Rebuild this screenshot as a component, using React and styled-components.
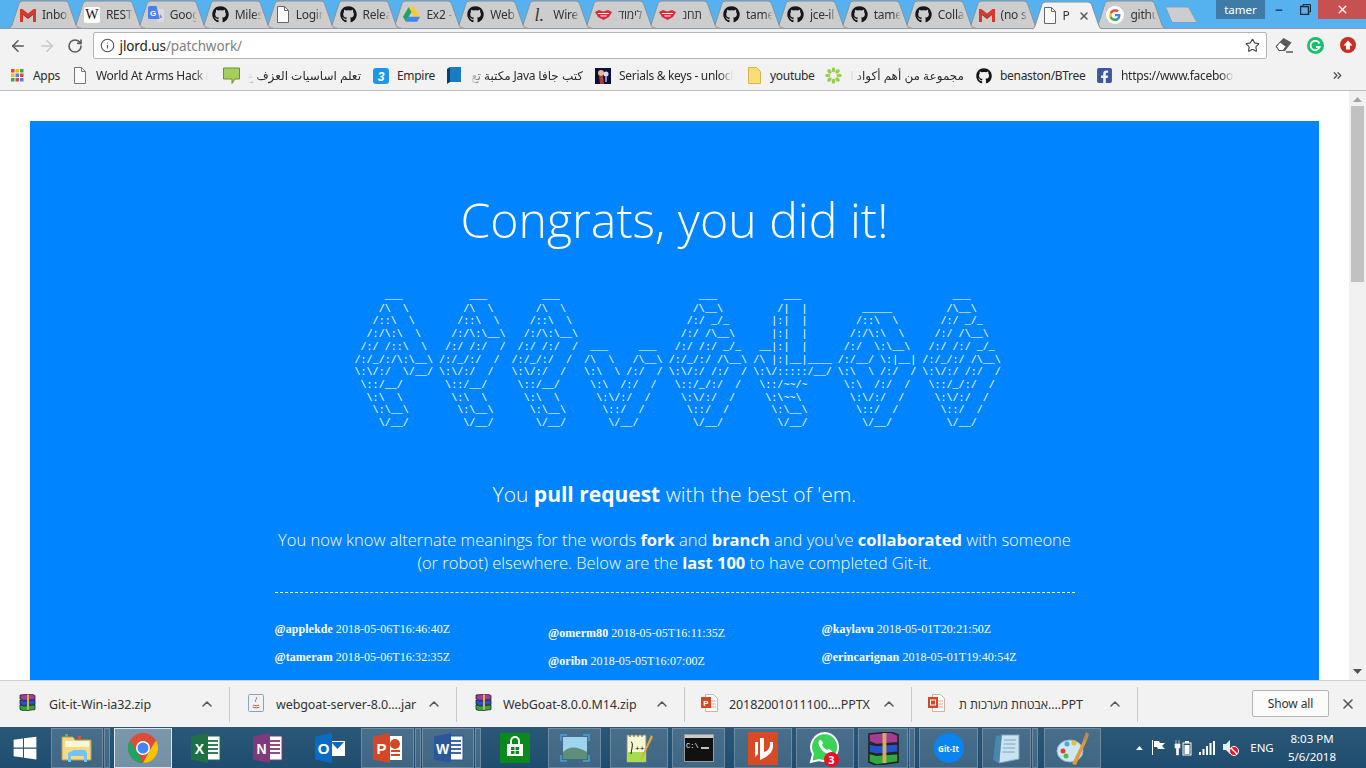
import React from "react";
import styled, { createGlobalStyle } from "styled-components";
import { FaGithub, FaFacebookSquare, FaWindows } from "react-icons/fa";
import { ArrowLeft, ArrowRight, RotateCw, Info, Star, ChevronUp, X, Minus, ChevronsRight } from "lucide-react";

const UI = `"Noto Sans", "Open Sans", "DejaVu Sans", sans-serif`;
const Global = createGlobalStyle`
  html, body { margin: 0; padding: 0; width: 1366px; height: 768px; overflow: hidden; background: #fff; }
  #root { width: 1366px; height: 768px; }
  * { box-sizing: border-box; }
`;
const Shell = styled.div`display:flex;flex-direction:column;width:1366px;height:768px;overflow:hidden;font-family:${UI};`;

/* ---------- tab strip ---------- */
const Strip = styled.div`position:relative;display:flex;align-items:flex-end;height:29px;flex:none;padding-left:7px;background:#56b2ee;border-bottom:1px solid #8f9aa3;`;
const TabBox = styled.div`
  position:relative;flex:0 0 74px;height:28px;margin-right:-10.1px;margin-bottom:${p => (p.$active ? "-1px" : "0")};
  z-index:${p => p.$z};display:flex;align-items:center;padding:1px 0 0 13px;gap:6px;
`;
const TabShape = styled.svg`position:absolute;left:0;top:0;z-index:-1;`;
const TabLabel = styled.span`
  width:${p => (p.$w || 27)}px;overflow:hidden;white-space:nowrap;font-size:12px;letter-spacing:-.25px;color:#333;
  -webkit-mask-image:linear-gradient(90deg,#000 70%,transparent);mask-image:linear-gradient(90deg,#000 70%,transparent);
`;
const TabClose = styled.span`display:flex;margin-left:1px;color:#5a5a5a;`;
const NewTab = styled.svg`flex:none;margin:0 0 3px 7px;position:relative;top:-1px;`;
const UserChip = styled.div`
  position:absolute;left:1216px;top:0;width:49px;height:19px;background:#3e7ba6;color:#fff;font-size:11.5px;
  display:flex;align-items:center;justify-content:center;
`;
const WinBtns = styled.div`position:absolute;right:0;top:0;display:flex;height:19px;`;
const WinBtn = styled.div`
  width:${p => p.$w}px;display:flex;align-items:center;justify-content:center;background:${p => p.$bg || "transparent"};color:${p => p.$c || "#1c2a33"};
`;

/* ---------- toolbar ---------- */
const Toolbar = styled.div`display:flex;align-items:center;height:33px;flex:none;background:#f2f2f2;padding:0 0 0 4px;`;
const NavBtn = styled.div`width:28.5px;display:flex;justify-content:center;color:${p => p.$c};`;
const Omni = styled.div`
  margin-left:3px;width:1174px;height:27px;background:#fff;border:1px solid #b4b4b4;border-radius:2px;display:flex;align-items:center;padding:0 6px 0 6px;
  color:#555;
`;
const Url = styled.div`margin-left:5px;flex:1;font-size:13.5px;letter-spacing:-.1px;color:#1b1b1b;`;
const UrlRest = styled.span`color:#808080;`;
const ExtRow = styled.div`display:flex;margin-left:1px;`;
const Ext = styled.div`width:32px;display:flex;justify-content:center;`;

/* ---------- bookmarks ---------- */
const Bookmarks = styled.div`display:flex;align-items:center;height:29px;flex:none;background:#f2f2f2;border-bottom:1px solid #bcbcbc;padding:0 0 1px 9px;position:relative;`;
const Mark = styled.div`flex:0 0 ${p => p.$w}px;display:flex;align-items:center;gap:8px;`;
const MarkIcon = styled.span`flex:0 0 16px;display:flex;justify-content:center;`;
const MarkLabel = styled.span`
  width:${p => p.$w}px;overflow:hidden;white-space:nowrap;font-size:12px;letter-spacing:-.3px;color:#2b2b2b;
  direction:${p => (p.$rtl ? "rtl" : "ltr")};
  ${p => (p.$fade ? `-webkit-mask-image:linear-gradient(${p.$rtl ? "270deg" : "90deg"},#000 88%,transparent);mask-image:linear-gradient(${p.$rtl ? "270deg" : "90deg"},#000 88%,transparent);` : "")}
`;
const More = styled.span`position:absolute;left:1331px;top:7px;color:#555;display:flex;`;

/* ---------- page ---------- */
const Viewport = styled.div`flex:1;min-height:0;display:flex;background:#fff;`;
const Page = styled.main`flex:1;min-width:0;height:100%;overflow:hidden;padding:30px 30px 0;`;
const Card = styled.section`
  background:#0084ff;color:#fff;height:700px;padding-top:62px;display:flex;flex-direction:column;align-items:center;
  font-family:"Open Sans",sans-serif;font-weight:300;
`;
const Title = styled.h1`margin:0;font-size:48.2px;line-height:72px;font-weight:300;`;
const Art = styled.pre`
  margin:36px 0 0 0;font-family:"Liberation Mono",monospace;font-size:10px;letter-spacing:.04px;line-height:12.7px;font-weight:400;width:642px;
  position:relative;left:1px;
`;
const Lead = styled.p`margin:47.5px 0 0;font-size:21px;line-height:32px;text-align:center;b{font-weight:700;}`;
const Body = styled.p`margin:19px 0 0;width:800px;font-size:16.5px;line-height:22.5px;text-align:center;b{font-weight:700;}`;
const Rule = styled.hr`width:800px;margin:18px 0 0;border:0;border-top:1px dashed #fff;`;
const Names = styled.div`width:800px;display:flex;margin-top:12px;font-family:"Liberation Serif",serif;font-size:12px;letter-spacing:.05px;font-weight:400;`;
const NameCol = styled.div`flex:0 0 273.5px;padding-top:${p => p.$top}px;display:flex;flex-direction:column;gap:13px;`;
const Name = styled.div`line-height:15px;white-space:nowrap;b{font-weight:700;}`;

const Scroll = styled.aside`flex:0 0 17px;background:#f1f1f1;display:flex;flex-direction:column;align-items:center;height:100%;`;
const Arrow = styled.svg`flex:none;margin:${p => p.$m};`;
const Thumb = styled.div`width:13px;height:176px;background:#c1c1c1;margin-top:4px;`;

/* ---------- downloads ---------- */
const Downloads = styled.div`display:flex;align-items:center;height:47px;flex:none;background:#f2f2f2;border-top:1px solid #cfcfcf;position:relative;`;
const Dl = styled.div`
  flex:0 0 ${p => p.$w}px;height:35px;display:flex;align-items:center;padding-left:${p => p.$pl || 17}px;border-right:1px solid #c9c9c9;
`;
const DlIcon = styled.span`flex:0 0 20px;display:flex;justify-content:center;margin-right:${p => p.$gap ?? 12}px;margin-top:-3px;`;
const DlName = styled.span`flex:1;font-size:12.5px;letter-spacing:-.1px;color:#333;white-space:nowrap;overflow:hidden;padding-top:1px;`;
const DlCaret = styled.span`flex:0 0 16px;display:flex;margin-right:14px;color:#555;`;
const ShowAll = styled.button`
  position:absolute;left:1252px;top:9px;width:77px;height:27px;background:#fbfbfb;border:1px solid #b5b5b5;border-radius:2px;font:12px ${UI};color:#333;padding:0;letter-spacing:-.1px;
`;
const DlClose = styled.span`position:absolute;left:1340px;top:15px;color:#555;display:flex;`;

/* ---------- taskbar ---------- */
const Taskbar = styled.div`position:relative;display:flex;align-items:stretch;height:41px;flex:none;background:linear-gradient(#2b5878,#1f4d6f);padding-top:1px;`;
const TaskBtn = styled.div`
  flex:0 0 ${p => p.$w}px;margin-left:${p => p.$ml || 0}px;display:flex;align-items:center;justify-content:center;position:relative;
  ${p => p.$open ? `background:rgba(255,255,255,.14);box-shadow:inset 0 0 0 1px rgba(255,255,255,.22);` : ""}
  ${p => p.$active ? `background:rgba(255,255,255,.38);box-shadow:inset 0 0 0 1px rgba(255,255,255,.75);` : ""}
`;
const Sliver = styled.div`flex:0 0 6px;margin-left:1px;background:rgba(255,255,255,.14);box-shadow:inset 0 0 0 1px rgba(255,255,255,.22);`;
const Tray = styled.div`position:absolute;left:1132px;top:0;bottom:0;display:flex;align-items:center;color:#fff;`;
const TrayIcon = styled.span`flex:0 0 ${p => p.$w}px;display:flex;justify-content:center;`;
const Lang = styled.span`flex:0 0 38px;text-align:center;font-size:11.5px;`;
const Clock = styled.div`flex:0 0 62px;text-align:center;font-size:11.5px;line-height:18px;`;
const GitIt = styled.div`
  width:30px;height:30px;border-radius:50%;background:#0a84f0;color:#fff;font-size:8px;font-weight:700;display:flex;align-items:center;justify-content:center;
`;
const Badge = styled.span`
  position:absolute;right:15px;bottom:1px;width:15px;height:15px;border-radius:50%;background:#e81123;color:#fff;font-size:11px;font-weight:700;display:flex;align-items:center;justify-content:center;
`;

/* ---------- icons ---------- */
const Gmail = () => (
  <svg width="16" height="14" viewBox="0 0 16 14"><path d="M0 1h2.400L8 5.600 13.600 1H16v13h-3V5.200L8 9.200 3 5.200V14H0z" fill="#d4392b"/><path d="M3 5.200 8 9.200l5-4V7L8 11 3 7z" fill="#a9281d"/></svg>
);
const Wiki = () => <WikiBox>W</WikiBox>;
const WikiBox = styled.span`width:16px;height:16px;background:#fff;border-radius:2px;color:#111;font:400 14px "Liberation Serif",serif;display:flex;align-items:center;justify-content:center;`;
const Translate = () => (
  <svg width="16" height="17" viewBox="0 0 16 17"><path d="M7 3h7.500A1.500 1.500 0 0 1 16 4.500v10A1.500 1.500 0 0 1 14.500 16H8.500l1.500-3z" fill="#d8dbe0"/><path d="M0 1.500A1.500 1.500 0 0 1 1.500 0h7l3 13H1.500A1.500 1.500 0 0 1 0 11.500z" fill="#4a80ee"/><text x="2" y="9.500" fontSize="8" fontWeight="700" fill="#fff" fontFamily="Liberation Sans">G</text><path d="M12 8l2.500 4-3-.5z" fill="#7b8aa3"/></svg>
);
const Doc = ({ c = "#666" }) => (
  <svg width="14" height="17" viewBox="0 0 14 17" fill="#fbfbfb" stroke={c} strokeWidth="1"><path d="M1.500.5h7l4 4v12h-11z"/><path d="M8.500.5v4h4" fill="none"/></svg>
);
const Drive = () => (
  <svg width="17" height="15" viewBox="0 0 17 15"><path d="M5.700 0h5.600l5.700 9.800h-5.600z" fill="#fcc934"/><path d="M5.700 0 0 9.800 2.800 14.700 8.500 4.900z" fill="#1fa463"/><path d="M2.800 14.700h11.400L17 9.800H5.600z" fill="#4285f4"/></svg>
);
const WireL = () => <WireBox>l.</WireBox>;
const WireBox = styled.span`width:16px;text-align:center;font:italic 400 18px "Liberation Serif",serif;color:#333;line-height:16px;`;
const Lips = () => (
  <svg width="17" height="10" viewBox="0 0 17 10"><path d="M0 2 4 0l4.500 1.500L13 0l4 2-3 5-5.500 3L3 7z" fill="#dc2a3a"/><path d="M2.500 3h12l-1 1H3.500zM5 5.500h7l-1 1H6z" fill="#fff"/></svg>
);
const GLogo = () => (
  <svg width="18" height="18" viewBox="0 0 18 18"><circle cx="9" cy="9" r="9" fill="#fff"/><path d="M14.500 9.200c0-.4 0-.8-.1-1.200H9v2.300h3.100a2.700 2.700 0 0 1-1.200 1.700v1.500h1.900c1.100-1 1.700-2.500 1.700-4.300z" fill="#4285f4"/><path d="M9 15c1.600 0 2.900-.5 3.800-1.500L10.900 12c-.5.400-1.200.6-1.900.6-1.500 0-2.800-1-3.200-2.400h-2v1.500C4.700 13.700 6.700 15 9 15z" fill="#34a853"/><path d="M5.800 10.200a3.600 3.600 0 0 1 0-2.400V6.300h-2a6 6 0 0 0 0 5.400z" fill="#fbbc05"/><path d="M9 5.400c.8 0 1.600.3 2.200.9l1.700-1.700A6 6 0 0 0 3.800 6.300l2 1.500C6.200 6.400 7.500 5.400 9 5.400z" fill="#ea4335"/></svg>
);
const Apps = () => (
  <svg width="13" height="13" viewBox="0 0 13 13">
    {["#ea4335", "#fbbc05", "#34a853", "#fbbc05", "#4285f4", "#ea4335", "#34a853", "#ea4335", "#4285f4"].map((c, i) => (
      <rect key={i} x={(i % 3) * 4.500} y={Math.floor(i / 3) * 4.500} width="3.500" height="3.500" fill={c} />
    ))}
  </svg>
);
const Chat = () => (
  <svg width="17" height="17" viewBox="0 0 17 17"><path d="M.5 1h16v11H12l-3 4.500V12H.5z" fill="#a4cf5e" stroke="#6c8f35"/></svg>
);
const Three = () => (
  <svg width="16" height="16" viewBox="0 0 16 16"><rect width="16" height="16" rx="3" fill="#1e96e6"/><text x="8" y="12.500" textAnchor="middle" fontSize="12" fontWeight="700" fontStyle="italic" fill="#fff" fontFamily="Liberation Sans">3</text></svg>
);
const Book = () => (
  <svg width="14" height="17" viewBox="0 0 14 17"><rect x="3" width="11" height="15" fill="#1b7cc4"/><path d="M0 2 3 0v15l-3 2z" fill="#0e3f66"/></svg>
);
const Serials = () => (
  <svg width="16" height="16" viewBox="0 0 16 16"><rect width="16" height="16" fill="#0c0e3c"/><circle cx="6" cy="5" r="3" fill="#e5b98b"/><path d="M4 8h4l1 8H5z" fill="#b23a3a"/><circle cx="11" cy="6" r="2.500" fill="#d9d9e8"/><path d="M10 8h2v6h-2z" fill="#8893c7"/></svg>
);
const Folder = () => (
  <svg width="13" height="17" viewBox="0 0 13 17"><path d="M.5.5h8l4 4v12H.5z" fill="#fbdc78" stroke="#d8b44f"/></svg>
);
const Flower = () => (
  <svg width="17" height="17" viewBox="0 0 17 17" fill="#9ccc4a">
    {[0, 45, 90, 135, 180, 225, 270, 315].map(a => <ellipse key={a} cx="8.500" cy="2.800" rx="1.800" ry="2.600" transform={`rotate(${a} 8.500 8.500)`} />)}
  </svg>
);
const Eraser = () => (
  <svg width="20" height="16" viewBox="0 0 20 16"><path d="M9.500 1 17.500 5.500 11 14H5L1.500 9.500z" fill="#5a5a5a"/><path d="M2.500 9.500 6 5 12 9.500 9 13.500H5z" fill="#fff" stroke="#5a5a5a"/><path d="M12 15h7" stroke="#5a5a5a" strokeWidth="1.500"/></svg>
);
const Grammarly = () => (
  <svg width="17" height="17" viewBox="0 0 17 17"><circle cx="8.500" cy="8.500" r="8.500" fill="#15c26b"/><path d="M12.500 6.500a4.700 4.700 0 1 0 .2 3.500H9" fill="none" stroke="#fff" strokeWidth="1.800"/></svg>
);
const Upload = () => (
  <svg width="16" height="16" viewBox="0 0 16 16"><circle cx="8" cy="8" r="8" fill="#c62f22"/><path d="M8 3.500 12.500 8.500H10V12.500H6V8.500H3.500z" fill="#fff"/></svg>
);
const Rar = ({ s = 17 }) => (
  <svg width={s} height={s} viewBox="0 0 17 17">
    <path d="M1 1 12 0l4 1.500v4L5 6.500 1 5z" fill="#a43c96" stroke="#222" strokeWidth=".8"/>
    <path d="M1 6l4 1 11-1v4.500L5 11.500 1 10.500z" fill="#2453c9" stroke="#222" strokeWidth=".8"/>
    <path d="M1 11l4 1 11-1v4.500L5 17l-4-1.500z" fill="#2ea83f" stroke="#222" strokeWidth=".8"/>
    <path d="M8 .5h2v15.500H8z" fill="#d2ac62"/>
  </svg>
);
const JavaFile = () => (
  <svg width="16" height="18" viewBox="0 0 16 18"><rect x=".5" y=".5" width="15" height="17" rx="1" fill="#eef2f6" stroke="#8ea1b6"/><path d="M8 3c2 2-2 3 0 5M5 11c2 1 5 1 6 0M4.500 13c2 1 6 1 7 0" fill="none" stroke="#c7592c" strokeWidth="1"/></svg>
);
const PptFile = ({ box }) => (
  <svg width="18" height="18" viewBox="0 0 18 18"><path d="M4.500.5h8l4 4v13h-12z" fill="#fff" stroke="#c9b3a8"/><path d="M10 7h5M10 10h5M10 13h5" stroke="#e6a58c"/><rect y="3" width="10" height="11" fill="#d24726"/>{box ? <rect x="2.500" y="6" width="5" height="5" fill="none" stroke="#fff"/> : <text x="5" y="12" textAnchor="middle" fontSize="8" fontWeight="700" fill="#fff" fontFamily="Liberation Sans">P</text>}</svg>
);
const OfficeIcon = ({ bg, letter, sheet }) => (
  <svg width="31" height="30" viewBox="0 0 31 30">
    <path d="M13 3h17v24H13z" fill="#fff" stroke={bg}/>
    {[8, 12, 16, 20].map(y => <path key={y} d={`M15 ${y}h13`} stroke={sheet || bg} strokeWidth="1.800"/>)}
    <path d="M1 3.500 18 0v30L1 26.500z" fill={bg}/>
    <text x="9.500" y="20.500" textAnchor="middle" fontSize="14" fontWeight="700" fill="#fff" fontFamily="Liberation Sans">{letter}</text>
  </svg>
);
const Explorer = () => (
  <svg width="32" height="30" viewBox="0 0 32 30"><path d="M1 4h11l2 3h16v20H1z" fill="#f4d98a" stroke="#b99b4d"/><path d="M4 8h24v6H4z" fill="#fff6d8"/><rect x="4" y="1" width="3" height="3" fill="#58b947"/><rect x="17" y="3" width="3" height="3" fill="#d9503f"/><path d="M7 29V20l6-3h11l2 3v9h-3v-6H10v6z" fill="#74c3ee"/></svg>
);
const Chrome = () => (
  <svg width="30" height="30" viewBox="0 0 30 30"><circle cx="15" cy="15" r="15" fill="#dd4b39"/><path d="M15 30 22 17 28 7.500A15 15 0 0 1 15 30z" fill="#f6c500"/><path d="M15 30A15 15 0 0 1 2 7.500L9 18.500z" fill="#1ea362"/><circle cx="15" cy="15" r="7" fill="#fff"/><circle cx="15" cy="15" r="5.500" fill="#4285f4"/></svg>
);
const Outlook = () => (
  <svg width="31" height="30" viewBox="0 0 31 30"><path d="M16 8h15v15H16z" fill="#fff"/><path d="M17 9l6.500 7L30 9z" fill="#0a6bc4"/><path d="M1 3.500 18 0v30L1 26.500z" fill="#0a6bc4"/><text x="9.500" y="20.500" textAnchor="middle" fontSize="15" fontWeight="700" fill="#fff" fontFamily="Liberation Sans">O</text></svg>
);
const Ppt = () => (
  <svg width="31" height="30" viewBox="0 0 31 30"><path d="M13 3h17v24H13z" fill="#fff"/><circle cx="23" cy="11" r="5" fill="#d24726"/><path d="M19 18h9M19 22h9" stroke="#d24726" strokeWidth="1.800"/><path d="M1 3.500 18 0v30L1 26.500z" fill="#d24726"/><text x="9.500" y="20.500" textAnchor="middle" fontSize="15" fontWeight="700" fill="#fff" fontFamily="Liberation Sans">P</text></svg>
);
const Store = () => (
  <svg width="30" height="30" viewBox="0 0 30 30"><rect width="30" height="30" fill="#0b8a1c"/><path d="M7 11h16v12H7z" fill="#fff"/><path d="M11 11V8a4 4 0 0 1 8 0v3" fill="none" stroke="#fff" strokeWidth="2"/><path d="M11 14h3.500v3H11zM15.500 14H19v3h-3.500zM11 18h3.500v3H11zM15.500 18H19v3h-3.500z" fill="#0b8a1c"/></svg>
);
const Photos = () => (
  <svg width="30" height="28" viewBox="0 0 30 28"><rect x="3" y="3" width="24" height="22" fill="#9fd4ee"/><path d="M3 18c6-6 14-6 24 0v7H3z" fill="#5d8f7a"/><path d="M1 7V1h6M23 1h6v6M1 21v6h6M29 21v6h-6" fill="none" stroke="#4aa4dc" strokeWidth="1.500"/></svg>
);
const Npp = () => (
  <svg width="30" height="32" viewBox="0 0 30 32"><path d="M3 3h19v27H3z" fill="#f6f8d2" stroke="#888"/><path d="M3 20h19v10H3z" fill="#a6dd4c"/><path d="M6 1v4M10 1v4M14 1v4M18 1v4" stroke="#555"/><text x="11" y="19" fontSize="8" fill="#111" fontFamily="Liberation Mono">++</text><path d="M7 10c3 0 0 10 0 12" stroke="#111" fill="none"/><path d="M27 3 18 24l-2 4 3-3L29 5z" fill="#e7a53a"/></svg>
);
const Cmd = () => (
  <svg width="30" height="28" viewBox="0 0 30 28"><rect x=".5" y=".5" width="29" height="27" fill="#111" stroke="#9a9a9a"/><rect x="1" y="1" width="28" height="3" fill="#c9c9c9"/><text x="2" y="14" fontSize="7" fill="#fff" fontFamily="Liberation Mono">C:\</text><path d="M17 14h8" stroke="#fff" strokeWidth="1.500"/></svg>
);
const Foxit = () => (
  <svg width="30" height="33" viewBox="0 0 30 33"><rect width="30" height="33" fill="#d84a24"/><path d="M12 6h4v14c3-1 5-2 6-7v-3h3v4c0 7-6 11-13 14z" fill="#fff"/><path d="M7 10h3v12l-3 3z" fill="#fff"/></svg>
);
const Whats = () => (
  <svg width="32" height="32" viewBox="0 0 32 32"><path d="M16 1a14 14 0 0 0-12 21L2 30l8-2A14 14 0 1 0 16 1z" fill="#3ed15a" stroke="#fff" strokeWidth="2"/><path d="M11 8c-2 1-2 4 0 7 2 4 6 7 9 7 2 0 3-1 3-3l-3-2-2 1c-2-1-4-3-5-5l1-2-2-3z" fill="#fff"/></svg>
);
const Notepad = () => (
  <svg width="30" height="32" viewBox="0 0 30 32"><path d="M9 3h18v24l-20 4z" fill="#c9e4f0" stroke="#7fa7b8"/><path d="M10 3l-3 28-6-3 3-24z" fill="#4b87ad"/><path d="M12 8h12M11.500 12h12M11 16h12M10.500 20h12" stroke="#7aa5bb"/></svg>
);
const Paint = () => (
  <svg width="34" height="34" viewBox="0 0 34 34"><ellipse cx="14" cy="20" rx="13" ry="11" fill="#cfe6f3" stroke="#8eb4c8"/><circle cx="7" cy="20" r="2.500" fill="#e03c3c"/><circle cx="11" cy="13" r="2.500" fill="#46a8e0"/><circle cx="18" cy="12" r="2.500" fill="#e8c02f"/><circle cx="10" cy="25" r="2.500" fill="#54b948"/><path d="M16 33 28 8l3 1-11 25z" fill="#e19a3c"/><path d="M27 9l3-8 3 2-2 7z" fill="#b98a52"/></svg>
);
const NotifFlag = () => (
  <svg width="14" height="15" viewBox="0 0 14 15" fill="#fff"><path d="M1 0h1v15H1zM3 1h5l1 2h5L11 6l3 3H7L6 7H3z"/></svg>
);
const Battery = () => (
  <svg width="18" height="16" viewBox="0 0 18 16"><rect x="9" y="3" width="8" height="12" fill="none" stroke="#fff"/><rect x="11" y="1" width="4" height="2" fill="#fff"/><rect x="10.500" y="5" width="5" height="9" fill="#fff"/><path d="M2 0v4M5 0v4M1 4h5v4H4.500v7h-2V8H1z" fill="#fff" stroke="#fff" strokeWidth=".6"/></svg>
);
const Signal = () => (
  <svg width="16" height="14" viewBox="0 0 16 14" fill="#fff"><rect x="0" y="11" width="2" height="3"/><rect x="3.500" y="8" width="2" height="6"/><rect x="7" y="5" width="2" height="9"/><rect x="10.500" y="2" width="2" height="12"/><rect x="14" y="0" width="2" height="14"/></svg>
);
const Volume = () => (
  <svg width="16" height="17" viewBox="0 0 16 17"><path d="M0 5h3l4-4v14l-4-4H0z" fill="#e8eef2"/><circle cx="11" cy="12" r="4.500" fill="#e81123" stroke="#fff"/><path d="M8 9l6 6" stroke="#fff" strokeWidth="1.500"/></svg>
);

/* ---------- data ---------- */
const Gh = () => <FaGithub size={17} color="#161616" />;
const tabs = [
  [<Gmail />, "Inbox"], [<Wiki />, "REST"], [<Translate />, "Google"], [<Gh />, "Milestone"],
  [<Doc />, "Login"], [<Gh />, "Releases"], [<Drive />, "Ex2 - "], [<Gh />, "Web"],
  [<WireL />, "Wire"], [<Lips />, "לימוד"], [<Lips />, "תחנ"], [<Gh />, "tamer"],
  [<Gh />, "jce-il"], [<Gh />, "tamer"], [<Gh />, "Collab"],
  [<Gmail />, "(no s"], [<Doc />, "P", true], [<GLogo />, "github"],
];
const art = [
  [[5, "___"], [19, "___"], [31, "___"], [57, "___"], [71, "___"], [99, "___"]],
  [[4, "/\\  \\"], [18, "/\\  \\"], [30, "/\\  \\"], [56, "/\\__\\"], [70, "/|  |"], [84, "_____"], [98, "/\\__\\"]],
  [[3, "/::\\  \\"], [17, "/::\\  \\"], [29, "/::\\  \\"], [55, "/:/ _/_"], [69, "|:|  |"], [83, "/::\\  \\"], [97, "/:/ _/_"]],
  [[2, "/:/\\:\\  \\"], [16, "/:/\\:\\__\\"], [28, "/:/\\:\\__\\"], [54, "/:/ /\\__\\"], [69, "|:|  |"], [82, "/:/\\:\\  \\"], [96, "/:/ /\\__\\"]],
  [[1, "/:/ /::\\  \\"], [15, "/:/ /:/  /"], [27, "/:/ /:/  /"], [39, "___"], [47, "___"], [53, "/:/ /:/ _/_"], [67, "__|:|  |"], [81, "/:/  \\:\\__\\"], [95, "/:/ /:/ _/_"]],
  [[0, "/:/_/:/\\:\\__\\"], [14, "/:/_/:/  /"], [26, "/:/_/:/  /"], [38, "/\\  \\"], [46, "/\\__\\"], [52, "/:/_/:/ /\\__\\"], [66, "/\\ |:|__|____"], [80, "/:/__/ \\:|__|"], [94, "/:/_/:/ /\\__\\"]],
  [[0, "\\:\\/:/  \\/__/"], [14, "\\:\\/:/  /"], [26, "\\:\\/:/  /"], [38, "\\:\\  \\"], [45, "/:/  /"], [52, "\\:\\/:/ /:/  /"], [66, "\\:\\/:::::/__/"], [80, "\\:\\  \\ /:/  /"], [94, "\\:\\/:/ /:/  /"]],
  [[1, "\\::/__/"], [15, "\\::/__/"], [27, "\\::/__/"], [39, "\\:\\  /:/  /"], [53, "\\::/_/:/  /"], [67, "\\::/~~/~"], [81, "\\:\\  /:/  /"], [95, "\\::/_/:/  /"]],
  [[2, "\\:\\  \\"], [16, "\\:\\  \\"], [28, "\\:\\  \\"], [40, "\\:\\/:/  /"], [54, "\\:\\/:/  /"], [68, "\\:\\~~\\"], [82, "\\:\\/:/  /"], [96, "\\:\\/:/  /"]],
  [[3, "\\:\\__\\"], [17, "\\:\\__\\"], [29, "\\:\\__\\"], [41, "\\::/  /"], [55, "\\::/  /"], [69, "\\:\\__\\"], [83, "\\::/  /"], [97, "\\::/  /"]],
  [[4, "\\/__/"], [18, "\\/__/"], [30, "\\/__/"], [42, "\\/__/"], [56, "\\/__/"], [70, "\\/__/"], [84, "\\/__/"], [98, "\\/__/"]],
].map(row => row.reduce((s, [c, t]) => s.padEnd(c, " ") + t, "")).join("\n");

const marks = [
  { w: 63, icon: <Apps />, label: "Apps", lw: 30 },
  { w: 151, icon: <Doc c="#777" />, label: "World At Arms Hack (", lw: 112, fade: 1 },
  { w: 150, icon: <Chat />, label: "تعلم اساسيات العزف ع", lw: 113, rtl: 1, fade: 1 },
  { w: 73, icon: <Three />, label: "Empire", lw: 42 },
  { w: 149, icon: <Book />, label: "كتب جافا Java مكتبة تع", lw: 113, rtl: 1, fade: 1 },
  { w: 151, icon: <Serials />, label: "Serials & keys - unlock", lw: 114, fade: 1 },
  { w: 79, icon: <Folder />, label: "youtube", lw: 46 },
  { w: 151, icon: <Flower />, label: "مجموعة من أهم أكواد ا", lw: 114, rtl: 1, fade: 1 },
  { w: 120, icon: <FaGithub size={16} color="#161616" />, label: "benaston/BTree", lw: 86 },
  { w: 130, icon: <FaFacebookSquare size={17} color="#3b5998" />, label: "https://www.facebook", lw: 113, fade: 1 },
];
const downloads = [
  { w: 230, icon: <Rar />, name: "Git-it-Win-ia32.zip" },
  { w: 227, icon: <JavaFile />, name: "webgoat-server-8.0....jar", pl: 16, gap: 10 },
  { w: 228, icon: <Rar />, name: "WebGoat-8.0.0.M14.zip", pl: 16, gap: 10 },
  { w: 227, icon: <PptFile />, name: "20182001011100....PPTX", pl: 15, gap: 9 },
  { w: 226, icon: <PptFile box />, name: "אבטחת מערכות ת....PPT", pl: 15 },
];
const names = [
  [16.5, "@applekde", "2018-05-06T16:46:40Z", "@tameram", "2018-05-06T16:32:35Z"],
  [20.5, "@omerm80", "2018-05-05T16:11:35Z", "@oribn", "2018-05-05T16:07:00Z"],
  [16.5, "@kaylavu", "2018-05-01T20:21:50Z", "@erincarignan", "2018-05-01T19:40:54Z"],
];
const task = [
  { w: 50, icon: <FaWindows size={26} color="#fff" /> },
  { w: 52, ml: 1, open: 1, sl: 1, icon: <Explorer /> },
  { w: 58, ml: 4, open: 1, active: 1, icon: <Chrome /> },
  { w: 62, ml: 2, icon: <OfficeIcon bg="#1e7145" letter="X" /> },
  { w: 62, icon: <OfficeIcon bg="#80397b" letter="N" /> },
  { w: 62, icon: <Outlook /> },
  { w: 53, ml: 1, open: 1, sl: 1, icon: <Ppt /> },
  { w: 52, ml: 1, open: 1, sl: 1, icon: <OfficeIcon bg="#2b579a" letter="W" /> },
  { w: 62, ml: 3, icon: <Store /> },
  { w: 53, ml: 2, open: 1, icon: <Photos /> },
  { w: 58, ml: 9, open: 1, icon: <Npp /> },
  { w: 53, ml: 4, open: 1, icon: <Cmd /> },
  { w: 58, ml: 9, open: 1, icon: <Foxit /> },
  { w: 58, ml: 4, open: 1, icon: <Whats />, badge: "3" },
  { w: 50, ml: 4, open: 1, sl: 1, icon: <Rar s={33} /> },
  { w: 59, ml: 4, open: 1, icon: <GitIt>Git-It</GitIt> },
  { w: 49, ml: 4, open: 1, sl: 1, icon: <Notepad /> },
  { w: 57, ml: 6, open: 1, icon: <Paint /> },
];

export default function App() {
  return (
    <Shell>
      <Global />
      <Strip>
        {tabs.map(([icon, label, active], i) => (
          <TabBox key={i} $active={active} $z={active ? 50 : 30 - i}>
            <TabShape width="74" height="28" viewBox="0 0 74 28">
              <path d="M0 28h1.500Q4 28 5 25L12 3.500Q13 1 15.500 1H58Q60.500 1 61.500 3.500L69 25Q70 28 72.500 28H74" fill={active ? "#f2f2f2" : "#cdcdcd"} stroke="#84929c" />
            </TabShape>
            {icon}
            <TabLabel $w={active ? 8 : 27}>{label}</TabLabel>
            {active && <TabClose><X size={12} strokeWidth={3} /></TabClose>}
          </TabBox>
        ))}
        <NewTab width="34" height="18" viewBox="0 0 34 18"><path d="M1.500 1H24.500L33 16.500H8z" fill="#cdcdcd" stroke="#6fa5cd" /></NewTab>
        <UserChip>tamer</UserChip>
        <WinBtns>
          <WinBtn $w={27}><Minus size={10} strokeWidth={3} /></WinBtn>
          <WinBtn $w={26}>
            <svg width="11" height="11" viewBox="0 0 11 11" fill="none" stroke="#1c2a33"><rect x=".5" y="2.500" width="8" height="8" strokeWidth="1.500" /><path d="M3 2.500V.5h7.500v7.500H8.500" /></svg>
          </WinBtn>
          <WinBtn $w={48} $bg="#c75050" $c="#fff"><X size={13} strokeWidth={2.5} /></WinBtn>
        </WinBtns>
      </Strip>

      <Toolbar>
        <NavBtn $c="#5a5a5a"><ArrowLeft size={18} strokeWidth={2} /></NavBtn>
        <NavBtn $c="#c8c8c8"><ArrowRight size={18} strokeWidth={2} /></NavBtn>
        <NavBtn $c="#5a5a5a"><RotateCw size={16} strokeWidth={2.4} /></NavBtn>
        <Omni>
          <Info size={15} strokeWidth={1.8} />
          <Url>jlord.us<UrlRest>/patchwork/</UrlRest></Url>
          <Star size={15} strokeWidth={1.8} color="#444" />
        </Omni>
        <ExtRow>
          <Ext><Eraser /></Ext>
          <Ext><Grammarly /></Ext>
          <Ext><Upload /></Ext>
        </ExtRow>
      </Toolbar>

      <Bookmarks>
        {marks.map((m, i) => (
          <Mark key={i} $w={m.w}>
            <MarkIcon>{m.icon}</MarkIcon>
            <MarkLabel $w={m.lw} $rtl={m.rtl} $fade={m.fade}>{m.label}</MarkLabel>
          </Mark>
        ))}
        <More><ChevronsRight size={13} strokeWidth={2.5} /></More>
      </Bookmarks>

      <Viewport>
        <Page>
          <Card>
            <Title>Congrats, you did it!</Title>
            <Art>{art}</Art>
            <Lead>You <b>pull request</b> with the best of 'em.</Lead>
            <Body>
              You now know alternate meanings for the words <b>fork</b> and <b>branch</b> and you've <b>collaborated</b> with someone (or robot) elsewhere. Below are the <b>last 100</b> to have completed Git-it.
            </Body>
            <Rule />
            <Names>
              {names.map(([top, a, ad, b, bd]) => (
                <NameCol key={a} $top={top}>
                  <Name><b>{a}</b> {ad}</Name>
                  <Name><b>{b}</b> {bd}</Name>
                </NameCol>
              ))}
            </Names>
          </Card>
        </Page>
        <Scroll>
          <Arrow $m="6px 0 0" width="9" height="5" viewBox="0 0 9 5"><path d="M4.500 0 9 5H0z" fill="#a3a3a3" /></Arrow>
          <Thumb />
          <Arrow $m="auto 0 6px" width="9" height="5" viewBox="0 0 9 5"><path d="M4.500 5 9 0H0z" fill="#505050" /></Arrow>
        </Scroll>
      </Viewport>

      <Downloads>
        {downloads.map((d, i) => (
          <Dl key={i} $w={d.w} $pl={d.pl}>
            <DlIcon $gap={d.gap}>{d.icon}</DlIcon>
            <DlName>{d.name}</DlName>
            <DlCaret><ChevronUp size={16} strokeWidth={2.2} /></DlCaret>
          </Dl>
        ))}
        <ShowAll>Show all</ShowAll>
        <DlClose><X size={16} strokeWidth={2.4} /></DlClose>
      </Downloads>

      <Taskbar>
        {task.map((t, i) => (
          <React.Fragment key={i}>
            <TaskBtn $w={t.w} $ml={t.ml} $open={t.open} $active={t.active}>
              {t.icon}
              {t.badge && <Badge>{t.badge}</Badge>}
            </TaskBtn>
            {t.sl && <Sliver />}
          </React.Fragment>
        ))}
        <Tray>
          <TrayIcon $w={14}><svg width="7" height="4" viewBox="0 0 7 4"><path d="M3.500 0 7 4H0z" fill="#fff" /></svg></TrayIcon>
          <TrayIcon $w={24}><NotifFlag /></TrayIcon>
          <TrayIcon $w={25}><Battery /></TrayIcon>
          <TrayIcon $w={24}><Signal /></TrayIcon>
          <TrayIcon $w={24}><Volume /></TrayIcon>
          <Lang>ENG</Lang>
          <Clock>8:03 PM<br />5/6/2018</Clock>
        </Tray>
      </Taskbar>
    </Shell>
  );
}
